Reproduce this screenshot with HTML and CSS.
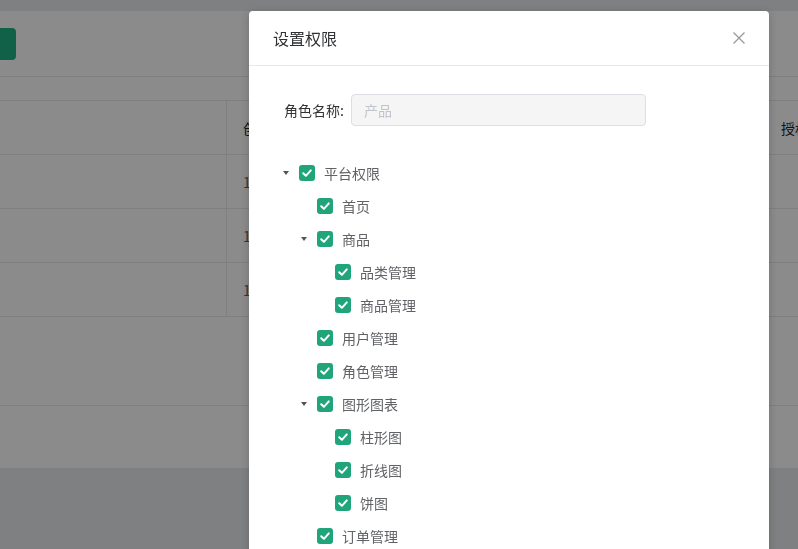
FILE: index.html
```html
<!DOCTYPE html>
<html lang="zh">
<head>
<meta charset="utf-8">
<title>设置权限</title>
<link rel="stylesheet" href="styles.css">
</head>
<body>
<div class="page">
  <div class="card">
    <div class="toolbar"><button class="btn-create">创建角色</button></div>
    <div class="table">
      <div class="tr th">
        <div class="td"></div>
        <div class="td">创建时间</div>
        <div class="td">授权时间</div>
      </div>
      <div class="tr">
        <div class="td"></div>
        <div class="td">1652330512345</div>
        <div class="td"></div>
      </div>
      <div class="tr">
        <div class="td"></div>
        <div class="td">1652330522345</div>
        <div class="td"></div>
      </div>
      <div class="tr">
        <div class="td"></div>
        <div class="td">1652330532345</div>
        <div class="td"></div>
      </div>
    </div>
    <div class="pager"></div>
  </div>
</div>

<div class="mask"></div>

<div class="dialog">
  <div class="dialog-header">
    <span class="dialog-title">设置权限</span>
    <svg class="close" width="12" height="12" viewBox="0 0 12 12"><path d="M0.5 0.5L11.5 11.5M11.5 0.5L0.5 11.5" stroke="#999" stroke-width="1.3" fill="none"/></svg>
  </div>
  <div class="dialog-body">
    <div class="form-row">
      <label class="form-label">角色名称:</label>
      <div class="input">产品</div>
    </div>
    <div class="tree">
      <div class="node"><span class="caret"><i class="tri"></i></span><span class="cb"><svg width="16" height="16" viewBox="0 0 16 16"><path d="M4.2 8.2L6.9 10.8L11.8 5.4" stroke="#fff" stroke-width="2" fill="none" stroke-linecap="round" stroke-linejoin="round"/></svg></span><span class="lbl">平台权限</span></div>
      <div class="node lv1"><span class="caret"></span><span class="cb"><svg width="16" height="16" viewBox="0 0 16 16"><path d="M4.2 8.2L6.9 10.8L11.8 5.4" stroke="#fff" stroke-width="2" fill="none" stroke-linecap="round" stroke-linejoin="round"/></svg></span><span class="lbl">首页</span></div>
      <div class="node lv1"><span class="caret"><i class="tri"></i></span><span class="cb"><svg width="16" height="16" viewBox="0 0 16 16"><path d="M4.2 8.2L6.9 10.8L11.8 5.4" stroke="#fff" stroke-width="2" fill="none" stroke-linecap="round" stroke-linejoin="round"/></svg></span><span class="lbl">商品</span></div>
      <div class="node lv2"><span class="caret"></span><span class="cb"><svg width="16" height="16" viewBox="0 0 16 16"><path d="M4.2 8.2L6.9 10.8L11.8 5.4" stroke="#fff" stroke-width="2" fill="none" stroke-linecap="round" stroke-linejoin="round"/></svg></span><span class="lbl">品类管理</span></div>
      <div class="node lv2"><span class="caret"></span><span class="cb"><svg width="16" height="16" viewBox="0 0 16 16"><path d="M4.2 8.2L6.9 10.8L11.8 5.4" stroke="#fff" stroke-width="2" fill="none" stroke-linecap="round" stroke-linejoin="round"/></svg></span><span class="lbl">商品管理</span></div>
      <div class="node lv1"><span class="caret"></span><span class="cb"><svg width="16" height="16" viewBox="0 0 16 16"><path d="M4.2 8.2L6.9 10.8L11.8 5.4" stroke="#fff" stroke-width="2" fill="none" stroke-linecap="round" stroke-linejoin="round"/></svg></span><span class="lbl">用户管理</span></div>
      <div class="node lv1"><span class="caret"></span><span class="cb"><svg width="16" height="16" viewBox="0 0 16 16"><path d="M4.2 8.2L6.9 10.8L11.8 5.4" stroke="#fff" stroke-width="2" fill="none" stroke-linecap="round" stroke-linejoin="round"/></svg></span><span class="lbl">角色管理</span></div>
      <div class="node lv1"><span class="caret"><i class="tri"></i></span><span class="cb"><svg width="16" height="16" viewBox="0 0 16 16"><path d="M4.2 8.2L6.9 10.8L11.8 5.4" stroke="#fff" stroke-width="2" fill="none" stroke-linecap="round" stroke-linejoin="round"/></svg></span><span class="lbl">图形图表</span></div>
      <div class="node lv2"><span class="caret"></span><span class="cb"><svg width="16" height="16" viewBox="0 0 16 16"><path d="M4.2 8.2L6.9 10.8L11.8 5.4" stroke="#fff" stroke-width="2" fill="none" stroke-linecap="round" stroke-linejoin="round"/></svg></span><span class="lbl">柱形图</span></div>
      <div class="node lv2"><span class="caret"></span><span class="cb"><svg width="16" height="16" viewBox="0 0 16 16"><path d="M4.2 8.2L6.9 10.8L11.8 5.4" stroke="#fff" stroke-width="2" fill="none" stroke-linecap="round" stroke-linejoin="round"/></svg></span><span class="lbl">折线图</span></div>
      <div class="node lv2"><span class="caret"></span><span class="cb"><svg width="16" height="16" viewBox="0 0 16 16"><path d="M4.2 8.2L6.9 10.8L11.8 5.4" stroke="#fff" stroke-width="2" fill="none" stroke-linecap="round" stroke-linejoin="round"/></svg></span><span class="lbl">饼图</span></div>
      <div class="node lv1"><span class="caret"></span><span class="cb"><svg width="16" height="16" viewBox="0 0 16 16"><path d="M4.2 8.2L6.9 10.8L11.8 5.4" stroke="#fff" stroke-width="2" fill="none" stroke-linecap="round" stroke-linejoin="round"/></svg></span><span class="lbl">订单管理</span></div>
    </div>
  </div>
</div>
</body>
</html>
```

FILE: styles.css
```css
* {
  box-sizing: border-box;
  margin: 0;
  padding: 0;
}

html, body {
  width: 798px;
  height: 549px;
  overflow: hidden;
}

body {
  background: #eaebec;
  font-family: "Noto Sans CJK SC", "Noto Sans", sans-serif;
  font-size: 14px;
  color: #333;
}

.page {
  padding-top: 11px;
}

.card {
  background: #fff;
  height: 457px;
  overflow: hidden;
}

.toolbar {
  height: 66px;
  padding-top: 17px;
  border-bottom: 1px solid #e9e9e9;
}

.btn-create {
  display: block;
  width: 110px;
  height: 32px;
  margin-left: -94px;
  border: 0;
  border-radius: 4px;
  background: #20b385;
  color: #fff;
  font-family: inherit;
  font-size: 14px;
}

.table {
  margin-top: 23px;
  border-top: 1px solid #e9e9e9;
}

.tr {
  display: grid;
  grid-template-columns: 227px 538px 1fr;
  height: 54px;
  border-bottom: 1px solid #e9e9e9;
  color: #606266;
}

.th {
  color: #222;
}

.td {
  display: flex;
  align-items: center;
  padding: 0 16px;
  border-right: 1px solid #e9e9e9;
  white-space: nowrap;
  overflow: hidden;
}

.td:last-child {
  border-right: 0;
}

.pager {
  height: 89px;
  border-bottom: 1px solid #e9e9e9;
}

.mask {
  position: fixed;
  inset: 0;
  background: rgba(0, 0, 0, 0.455);
}

.dialog {
  position: absolute;
  left: 249px;
  top: 11px;
  width: 520px;
  height: 560px;
  background: #fff;
  border-radius: 4px;
  box-shadow: 0 2px 8px rgba(0, 0, 0, 0.2);
}

.dialog-header {
  height: 55px;
  padding: 0 24px;
  border-bottom: 1px solid #e8e8e8;
  display: flex;
  align-items: center;
  justify-content: space-between;
}

.dialog-title {
  font-size: 16px;
  color: #303133;
}

.close {
  display: block;
}

.dialog-body {
  padding: 28px 24px;
}

.form-row {
  display: flex;
  align-items: center;
}

.form-label {
  width: 72px;
  text-align: right;
  color: #333;
  padding-right: 1px;
}

.input {
  margin-left: 6px;
  width: 295px;
  height: 32px;
  padding: 0 12px;
  display: flex;
  align-items: center;
  background: #f5f5f5;
  border: 1px solid #dcdfe6;
  border-radius: 4px;
  color: #c0c4cc;
}

.tree {
  margin-top: 30px;
}

.node {
  display: flex;
  align-items: center;
  height: 33px;
  color: #606266;
}

.lv1 {
  padding-left: 18px;
}

.lv2 {
  padding-left: 36px;
}

.caret {
  width: 26px;
  display: flex;
  justify-content: center;
  padding-right: 1px;
}

.tri {
  display: block;
  width: 0;
  height: 0;
  border-left: 3.5px solid transparent;
  border-right: 3.5px solid transparent;
  border-top: 4px solid #555;
}

.cb {
  width: 16px;
  height: 16px;
  border-radius: 3px;
  background: #20a57a;
  margin-right: 9px;
  display: block;
}

.cb svg {
  display: block;
}

.lbl {
  line-height: 1;
}
```
